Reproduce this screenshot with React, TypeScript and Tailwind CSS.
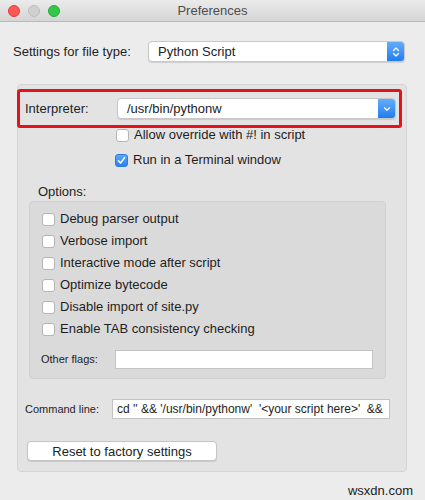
import React from 'react';

const font = { fontFamily: '"Liberation Sans", Arial, sans-serif' };

function Check({ checked = false }: { checked?: boolean }) {
  if (checked) {
    return (
      <div className="w-[13px] h-[13px] rounded-[3px] bg-gradient-to-b from-[#5aa7f8] to-[#2a82f0] border border-[#2a7ae0] flex items-center justify-center shrink-0">
        <svg width="9" height="9" viewBox="0 0 9 9">
          <path d="M1.5 4.8 L3.6 7 L7.6 1.6" stroke="white" strokeWidth="1.5" fill="none" strokeLinecap="round" strokeLinejoin="round" />
        </svg>
      </div>
    );
  }
  return <div className="w-[13px] h-[13px] rounded-[3px] bg-white border border-[#b5b5b5] shrink-0" />;
}

function Popup({ value, double = false, className = '' }: { value: string; double?: boolean; className?: string }) {
  return (
    <div className={`h-[21px] flex bg-white border border-[#c8c8c8] rounded-[4px] shadow-[0_1px_1px_rgba(0,0,0,0.12)] overflow-hidden ${className}`}>
      <div className="flex-1 flex items-center pl-[9px] text-[13px] text-[#222]">{value}</div>
      <div className="w-[17px] bg-gradient-to-b from-[#63acfb] to-[#1f7cef] flex items-center justify-center">
        {double ? (
          <svg width="8" height="12" viewBox="0 0 8 12">
            <path d="M1.5 4.5 L4 2 L6.5 4.5 M1.5 7.5 L4 10 L6.5 7.5" stroke="white" strokeWidth="1.3" fill="none" strokeLinecap="round" strokeLinejoin="round" />
          </svg>
        ) : (
          <svg width="8" height="6" viewBox="0 0 8 6">
            <path d="M1.5 1.8 L4 4.2 L6.5 1.8" stroke="white" strokeWidth="1.3" fill="none" strokeLinecap="round" strokeLinejoin="round" />
          </svg>
        )}
      </div>
    </div>
  );
}

const options = [
  'Debug parser output',
  'Verbose import',
  'Interactive mode after script',
  'Optimize bytecode',
  'Disable import of site.py',
  'Enable TAB consistency checking',
];

export default function App() {
  return (
    <div className="w-[425px] h-[500px] bg-[#ececec] flex flex-col text-[#1e1e1e] overflow-hidden" style={font}>
      {/* Title bar */}
      <div className="h-[22px] shrink-0 bg-gradient-to-b from-[#ebebeb] to-[#d5d5d5] border-b border-[#b9b9b9] flex items-center relative">
        <div className="flex gap-[8px] pl-[8px]">
          <div className="w-[12px] h-[12px] rounded-full bg-[#fc5753] border border-[#df3e3a]" />
          <div className="w-[12px] h-[12px] rounded-full bg-[#d0d0d0] border border-[#bdbdbd]" />
          <div className="w-[12px] h-[12px] rounded-full bg-[#34c84a] border border-[#25a936]" />
        </div>
        <div className="absolute inset-0 flex items-center justify-center text-[13px] text-[#4d4d4d]">Preferences</div>
      </div>

      {/* File type */}
      <div className="flex items-center mt-[19px] pl-[13px]">
        <span className="text-[13px] w-[135px]">Settings for file type:</span>
        <Popup value="Python Script" double className="w-[257px]" />
      </div>

      {/* Group box */}
      <div className="mt-[22px] ml-[17px] w-[390px] h-[389px] bg-[#e3e3e3] border border-[#d6d6d6] rounded-[4px] flex flex-col">
        <div className="mt-[4px] w-[385px] -ml-[1px] h-[39px] border-[3px] border-[#e4121a] rounded-[3px] flex items-center pl-[5px]">
          <span className="text-[13px] w-[92px]">Interpreter:</span>
          <Popup value="/usr/bin/pythonw" className="w-[279px]" />
        </div>
        <div className="flex items-center gap-[5px] ml-[98px] -mt-[2px] h-[18px]">
          <Check />
          <span className="text-[13px]">Allow override with #! in script</span>
        </div>
        <div className="flex items-center gap-[5px] ml-[97px] mt-[7px] h-[18px]">
          <Check checked />
          <span className="text-[13px]">Run in a Terminal window</span>
        </div>

        <div className="ml-[20px] mt-[15px] text-[13px] leading-[16px]">Options:</div>
        <div className="ml-[11px] mt-[1px] w-[357px] h-[178px] bg-[#dadada] border border-[#d0d0d0] rounded-[4px] flex flex-col pt-[6px]">
          {options.map((o) => (
            <div key={o} className="flex items-center gap-[5px] ml-[12px] h-[22px]">
              <Check />
              <span className="text-[13px]">{o}</span>
            </div>
          ))}
          <div className="flex items-center ml-[11px] mt-[10px]">
            <span className="text-[11px] w-[74px]">Other flags:</span>
            <div className="w-[258px] h-[19px] bg-white border border-[#c3c3c3]" />
          </div>
        </div>

        <div className="flex items-center ml-[7px] mt-[20px]">
          <span className="text-[11px] w-[87px]">Command line:</span>
          <div className="w-[278px] h-[20px] bg-white border border-[#c3c3c3] flex items-center pl-[4px] text-[12px] whitespace-pre overflow-hidden">
            {"cd '' && '/usr/bin/pythonw'  '<your script here>'  &&"}
          </div>
        </div>

        <button className="ml-[9px] mt-[22px] w-[190px] h-[20px] bg-white border border-[#c5c5c5] rounded-[4px] shadow-[0_1px_1px_rgba(0,0,0,0.12)] text-[13px] text-[#222]">
          Reset to factory settings
        </button>
      </div>

      <div className="flex justify-end pr-[12px] mt-[9px] text-[13px] text-[#222]">wsxdn.com</div>
    </div>
  );
}
